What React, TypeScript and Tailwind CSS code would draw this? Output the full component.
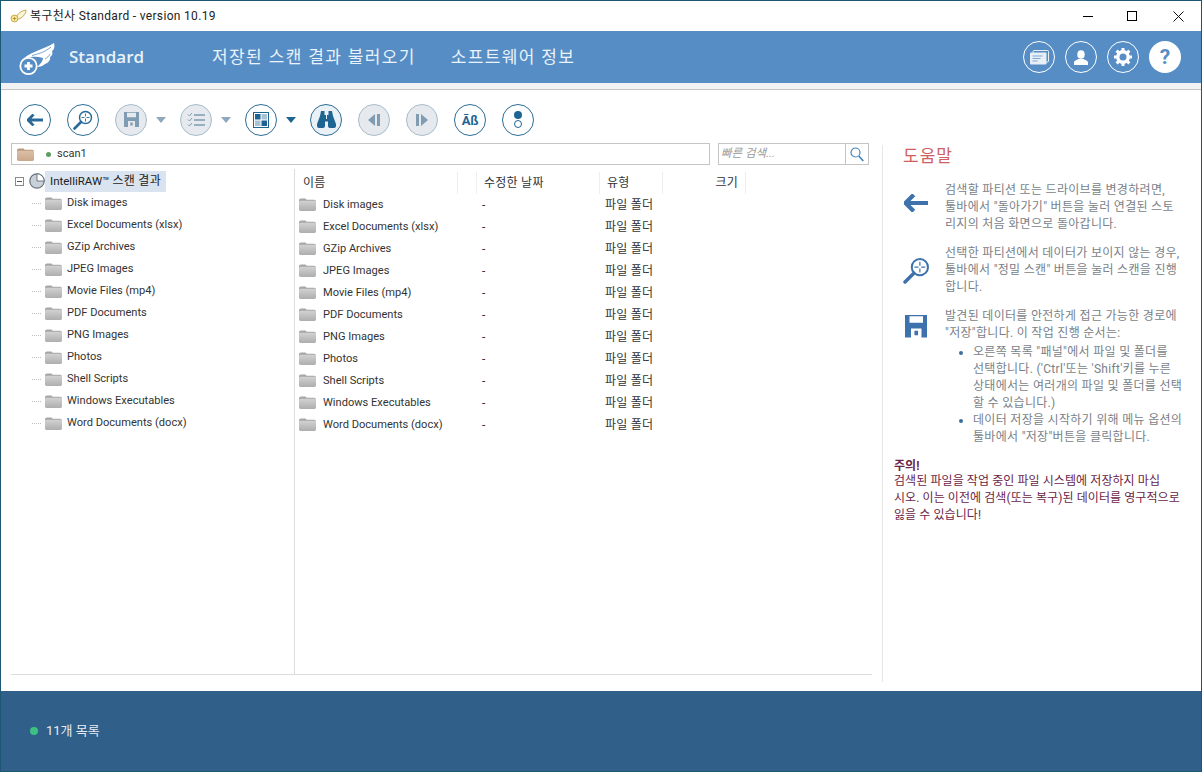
import React from "react";

const FONT = '"Roboto","Noto Sans CJK KR",sans-serif';
const names = ["Disk images","Excel Documents (xlsx)","GZip Archives","JPEG Images","Movie Files (mp4)","PDF Documents","PNG Images","Photos","Shell Scripts","Windows Executables","Word Documents (docx)"];

function Folder({ tan }: { tan?: boolean }) {
  const top = tan ? "#b9977b" : "#a6a6a6";
  const a = tan ? "#dcc0a8" : "#d2d2d2";
  const b = tan ? "#c9a78b" : "#aeaeae";
  return (
    <svg width="17" height="13" viewBox="0 0 18 14" preserveAspectRatio="none" className="shrink-0 mr-[1px]">
      <defs>
        <linearGradient id={tan ? "ft" : "fg"} x1="0" y1="0" x2="0" y2="1">
          <stop offset="0" stopColor={a} /><stop offset="1" stopColor={b} />
        </linearGradient>
      </defs>
      <path d="M2 0.500h4.500c1 0 1.200 1.500 2.500 1.500h7a2 2 0 0 1 2 2V6H0V2.500a2 2 0 0 1 2-2z" fill={top} />
      <rect x="0" y="3" width="18" height="11" rx="1.500" fill={`url(#${tan ? "ft" : "fg"})`} />
    </svg>
  );
}

function Tool({ dim, children }: { dim?: boolean; children: React.ReactNode }) {
  return (
    <div className={dim
      ? "w-8 h-8 rounded-full border border-[#a6bccb] bg-[#e6eaee] flex items-center justify-center shrink-0"
      : "w-8 h-8 rounded-full border border-[#2d6d96] bg-white flex items-center justify-center shrink-0"}>
      {children}
    </div>
  );
}

function Caret({ dim }: { dim?: boolean }) {
  return (
    <svg width="10" height="6" viewBox="0 0 10 6" className="ml-[9px] mr-[14px] shrink-0">
      <path d="M0 0h10L5 6z" fill={dim ? "#8fa8bd" : "#1f6593"} />
    </svg>
  );
}

const Arrow = ({ c = "#2a6a98", s = 1 }: { c?: string; s?: number }) => (
  <svg width={16 * s} height={12 * s} viewBox="0 0 16 12"><path d="M6.500 0.500 L1 6l5.500 5.500M1.500 6H16" fill="none" stroke={c} strokeWidth="2.800" /></svg>
);
const Scan = ({ c = "#2a6a98", s = 1 }: { c?: string; s?: number }) => (
  <svg width={20 * s} height={20 * s} viewBox="0 0 20 20" fill="none" stroke={c}>
    <circle cx="12.500" cy="7.500" r="6" strokeWidth="1.500" />
    <path d="M12.500 3.500v3M12.500 8.500v3M8.500 7.500h3M13.500 7.500h3" strokeWidth="0.900" />
    <path d="M8 12 L1.500 18.500" strokeWidth="2.600" strokeLinecap="round" />
  </svg>
);
const Floppy = ({ c = "#7f9cb3", s = 1 }: { c?: string; s?: number }) => (
  <svg width={15 * s} height={15 * s} viewBox="0 0 15 15">
    <path fillRule="evenodd" fill={c} d="M0 0h15v15H0zM3 0.800v4.400h9V0.800zM4 9v6h7V9z" />
    <rect x="6.300" y="10.500" width="2.400" height="3" fill={c} />
  </svg>
);

function Icon4({ children }: { children: React.ReactNode }) {
  return <div className="w-[42px] flex justify-center shrink-0 mt-[4px]">{children}</div>;
}

export default function App() {
  return (
    <div className="w-[1202px] h-[772px] flex flex-col bg-white border border-[#1c5872] overflow-hidden text-[12px] tracking-[0.25px] text-[#333]" style={{ fontFamily: FONT }}>
      {/* title bar */}
      <div className="h-[30px] flex items-center pl-[9px] shrink-0">
        <svg width="17" height="14" viewBox="0 0 17 14" className="shrink-0">
          <path d="M6 9C7 5 11 2 16 1c0 3-1 4-2 4.500 0 1.500-1 2-2 2.500-1 1.500-3 2-5 2z" fill="#fdf6d8" stroke="#b8952f" strokeWidth="0.800" />
          <circle cx="4.500" cy="9.500" r="3.400" fill="#f8eb9c" stroke="#b8952f" strokeWidth="0.800" />
          <path d="M2.800 9.500h3.400M4.500 7.800v3.400" stroke="#a88520" strokeWidth="0.800" />
        </svg>
        <span className="ml-[3px] text-[12px] text-[#222] tracking-[0.32px]">복구천사 Standard - version 10.19</span>
        <div className="flex-1" />
        <div className="w-[46px] h-full flex items-center justify-center mr-[-2px]"><div className="w-[10px] h-px bg-black" /></div>
        <div className="w-[46px] h-full flex items-center justify-center"><div className="w-[10px] h-[10px] border border-black" /></div>
        <div className="w-[46px] h-full flex items-center justify-center">
          <svg width="11" height="11" viewBox="0 0 11 11"><path d="M.5.5l10 10M10.500.5l-10 10" stroke="#111" strokeWidth="1" /></svg>
        </div>
      </div>

      {/* header */}
      <div className="h-[52px] bg-[#568dc5] flex items-center shrink-0 text-white">
        <svg width="38" height="34" viewBox="0 0 38 34" className="ml-[17px] shrink-0 mt-[3px]" fill="none">
          <path d="M3 20C9 10 25 8 36 1C37 5 36 8 34 9C35 12 34 14 32 15C33 18 30 21 27 22C25 24 22 25 19 25C23 22 25 18 25 16C18 14 9 14 3 20Z" fill="white" />
          <path d="M14 13.500C20 12 27 10 33 5" stroke="#568dc5" strokeWidth="0.800" />
          <path d="M27 17C29 16 31 14 32 12" stroke="#568dc5" strokeWidth="0.800" />
          <circle cx="10.500" cy="24" r="8.200" stroke="white" strokeWidth="1.800" />
          <path d="M6.500 24h8M10.500 20v8" stroke="white" strokeWidth="2.800" />
        </svg>
        <span className="ml-[13px] text-[17px] font-semibold text-[#eaf2fa] tracking-normal" style={{ fontFamily: '"Open Sans",sans-serif' }}>Standard</span>
        <span className="ml-[68px] mt-[1px] text-[17px] text-[#eaf2fa] tracking-[1.35px]">저장된 스캔 결과 불러오기</span>
        <span className="ml-[35px] mt-[1px] text-[17px] text-[#eaf2fa] tracking-[1.35px]">소프트웨어 정보</span>
        <div className="flex-1" />
        <div className="flex gap-[10px] mr-[20px]">
          <div className="w-8 h-8 rounded-full border border-white flex items-center justify-center">
            <svg width="19" height="15" viewBox="0 0 19 15"><rect x="3" y="0.500" width="15.500" height="11.500" rx="1" fill="none" stroke="#e8eff7" /><rect x="0" y="2.500" width="16.500" height="12" rx="1" fill="#e8eff7" /><path d="M2.500 6h10M2.500 8.500h8M2.500 11h5" stroke="#7fa8d2" strokeWidth="1.100" /></svg>
          </div>
          <div className="w-8 h-8 rounded-full border border-white flex items-center justify-center">
            <svg width="14" height="15" viewBox="0 0 14 15" fill="white"><ellipse cx="7" cy="4.500" rx="3.700" ry="4.300" /><path d="M0 15v-2.500c0-2 3-2.500 4.500-3.500h5c1.500 1 4.500 1.500 4.500 3.500V15z" /></svg>
          </div>
          <div className="w-8 h-8 rounded-full border border-white flex items-center justify-center">
            <svg width="20" height="20" viewBox="0 0 20 20"><circle cx="10" cy="10" r="5.200" fill="none" stroke="white" strokeWidth="3.400" /><path d="M10 1v18M1 10h18M3.600 3.600l12.800 12.800M16.400 3.600L3.600 16.400" stroke="white" strokeWidth="3" strokeDasharray="3.500 11 3.500 0" /></svg>
          </div>
          <div className="w-8 h-8 rounded-full bg-white flex items-center justify-center text-[#568dc5] text-[21px] font-bold leading-none tracking-normal">?</div>
        </div>
      </div>
      <div className="h-[7px] bg-[#f0f2f4] border-b border-[#c6c6c6] shrink-0" />

      {/* body */}
      <div className="flex-1 flex min-h-0">
        <div className="flex-1 min-w-0 flex flex-col">
          {/* toolbar */}
          <div className="h-[53px] flex items-center pl-[18px] shrink-0 pt-[6px]">
            <Tool><Arrow /></Tool>
            <div className="w-4 shrink-0" />
            <Tool><Scan /></Tool>
            <div className="w-4 shrink-0" />
            <Tool dim><Floppy /></Tool><Caret dim />
            <Tool dim>
              <svg width="18" height="16" viewBox="0 0 18 16" stroke="#7f9cb3" fill="none"><path d="M7 3h11M7 8h11M7 13h11" strokeWidth="1.500" /><path d="M1 2.500l1.500 1.500 2.500-3M1 7.500l1.500 1.500 2.500-3M1 12.500l1.500 1.500 2.500-3" strokeWidth="1" /></svg>
            </Tool><Caret dim />
            <Tool>
              <svg width="16" height="16" viewBox="0 0 16 16"><rect x=".5" y=".5" width="15" height="15" fill="none" stroke="#1f6593" /><rect x="2" y="2" width="5.500" height="5.500" fill="#1f6593" /><rect x="8.500" y="8.500" width="5.500" height="5.500" fill="#1f6593" /><rect x="8.500" y="2" width="5.500" height="5.500" fill="#a9c3d6" /><rect x="2" y="8.500" width="5.500" height="5.500" fill="#a9c3d6" /></svg>
            </Tool><Caret />
            <div className="w-8 h-8 rounded-full border-[1.500px] border-[#2d6d96] bg-[#eaf1f6] flex items-center justify-center shrink-0">
              <svg width="19" height="17" viewBox="0 0 19 17" fill="#1f6593"><path d="M4 0h3.500v4H9v4H10V4h1.500V0H15l1 5 3 8v2a2 2 0 0 1-2 2h-4a2 2 0 0 1-2-2V10.500H8V15a2 2 0 0 1-2 2H2a2 2 0 0 1-2-2v-2l3-8z" /></svg>
            </div>
            <div className="w-4 shrink-0" />
            <Tool dim>
              <svg width="14" height="14" viewBox="0 0 14 14" fill="#7f9cb3"><path d="M8 1v12L1 7z" /><rect x="10" y="1" width="3" height="12" /></svg>
            </Tool>
            <div className="w-4 shrink-0" />
            <Tool dim>
              <svg width="14" height="14" viewBox="0 0 14 14" fill="#7f9cb3"><path d="M6 1v12l7-6z" /><rect x="1" y="1" width="3" height="12" /></svg>
            </Tool>
            <div className="w-4 shrink-0" />
            <Tool><span className="text-[#1f6593] font-bold text-[13px] leading-none tracking-[-0.3px] pt-[1px]">Āß</span></Tool>
            <div className="w-4 shrink-0" />
            <Tool>
              <div className="flex flex-col items-center gap-[1px]">
                <div className="w-[8px] h-[8px] rounded-full bg-[#1f6593]" />
                <div className="w-[8px] h-[8px] rounded-full border border-[#1f6593]" />
              </div>
            </Tool>
          </div>

          {/* path + search */}
          <div className="flex h-[22px] ml-[10px] mr-[13px] shrink-0 gap-[8px]">
            <div className="flex-1 border border-[#c4c4c4] flex items-center pl-[5px]">
              <Folder tan />
              <div className="w-[5px] h-[5px] rounded-full bg-[#5d9e62] ml-[11px]" />
              <span className="ml-[6px] text-[11px] tracking-normal">scan1</span>
            </div>
            <div className="w-[151px] border border-[#c4c4c4] flex">
              <span className="flex-1 pl-[2px] italic text-[#9a9a9a] text-[11.500px] leading-[18px] tracking-normal">빠른 검색...</span>
              <div className="w-[23px] border-l border-[#c4c4c4] flex items-center justify-center">
                <svg width="14" height="15" viewBox="0 0 14 15" fill="none" stroke="#4a86b8"><circle cx="5.500" cy="5.500" r="4.500" strokeWidth="1.200" /><path d="M8.800 9l4.500 5" strokeWidth="1.800" /></svg>
              </div>
            </div>
          </div>

          {/* panes */}
          <div className="flex-1 min-h-0 flex ml-[10px] mr-[10px] mt-[4px]">
            <div className="w-[284px] border-r border-[#dcdcdc] shrink-0 pl-[4px] pt-[1px]">
              <div className="flex items-center h-[22px]">
                <div className="w-[9px] h-[9px] border border-[#8a8a8a] flex items-center justify-center"><div className="w-[5px] h-px bg-[#555]" /></div>
                <svg width="16" height="16" viewBox="0 0 16 16" className="ml-[5px] shrink-0"><circle cx="8" cy="8" r="7.200" fill="#c9d0d8" stroke="#66727e" strokeWidth="1.200" /><path d="M8 8V.8a7.200 7.200 0 0 1 7.200 7.200z" fill="#fff" stroke="#55606b" strokeWidth="0.800" /></svg>
                <span className="pl-[5px] pr-[5px] h-[21px] leading-[21px] bg-[#d9e4f0] text-[#222]"><span className="text-[11.500px] tracking-normal">IntelliRAW™</span> 스캔 결과</span>
              </div>
              {names.map((n) => (
                <div key={n} className="flex items-center h-[22px]">
                  <div className="ml-[17px] mr-[4px] w-[9px] border-t border-dotted border-[#c0c0c0]" />
                  <Folder />
                  <span className="ml-[4px] text-[11.100px] tracking-normal">{n}</span>
                </div>
              ))}
            </div>
            <div className="flex-1 pl-[8px] pt-[3px] min-w-0">
              <div className="flex h-[22px] items-center">
                <div className="w-[155px] h-full flex items-center border-r border-[#eeeeee]">이름</div>
                <div className="w-[19px] h-full border-r border-[#eeeeee]" />
                <div className="w-[123px] pl-[7px] h-full flex items-center border-r border-[#eeeeee]">수정한 날짜</div>
                <div className="w-[63px] pl-[7px] h-full flex items-center border-r border-[#eeeeee]">유형</div>
                <div className="w-[83px] pr-[7px] h-full flex items-center justify-end border-r border-[#eeeeee]">크기</div>
              </div>
              {names.map((n) => (
                <div key={n} className="flex items-center h-[22px]">
                  <div className="w-[183px] flex items-center ml-[-4px]">
                    <Folder />
                    <span className="ml-[6px] text-[11.100px] tracking-normal">{n}</span>
                  </div>
                  <div className="w-[123px]">-</div>
                  <div>파일 폴더</div>
                </div>
              ))}
            </div>
          </div>
          <div className="h-px bg-[#dcdcdc] ml-[10px] mr-[10px] shrink-0" />
          <div className="h-[16px] shrink-0" />
        </div>

        {/* help */}
        <div className="w-[319px] shrink-0 pb-[15px] pt-[49px]">
          <div className="h-full border-l border-[#e6e6e6] pl-[20px] text-[#7a7f88] leading-[17px] text-[12px] whitespace-nowrap tracking-[0.3px]">
            <div className="text-[17px] text-[#d0605f] leading-[22px] tracking-[1px] mt-[6px]">도움말</div>
            <div className="flex mt-[15px] ml-[-8px] gap-[8px]">
              <Icon4><div className="mt-[8px]"><Arrow c="#3e72ad" s={1.500} /></div></Icon4>
              <div>검색할 파티션 또는 드라이브를 변경하려면,<br />툴바에서 "돌아가기" 버튼을 눌러 연결된 스토<br />리지의 처음 화면으로 돌아갑니다.</div>
            </div>
            <div className="flex mt-[12px] ml-[-8px] gap-[8px]">
              <Icon4><div className="mt-[8px]"><Scan c="#3e72ad" s={1.350} /></div></Icon4>
              <div>선택한 파티션에서 데이터가 보이지 않는 경우,<br />툴바에서 "정밀 스캔" 버튼을 눌러 스캔을 진행<br />합니다.</div>
            </div>
            <div className="flex mt-[12px] ml-[-8px] gap-[8px]">
              <Icon4><div className="mt-[3px]"><Floppy c="#3e72ad" s={1.500} /></div></Icon4>
              <div>
                <div>발견된 데이터를 안전하게 접근 가능한 경로에<br />"저장"합니다. 이 작업 진행 순서는:</div>
                <ul className="list-disc pl-[28px] mt-[2px] marker:text-[#3e6d9e]">
                  <li>오른쪽 목록 "패널"에서 파일 및 폴더를<br />선택합니다. ('Ctrl'또는 'Shift'키를 누른<br />상태에서는 여러개의 파일 및 폴더를 선택<br />할 수 있습니다.)</li>
                  <li>데이터 저장을 시작하기 위해 메뉴 옵션의<br />툴바에서 "저장"버튼을 클릭합니다.</li>
                </ul>
              </div>
            </div>
            <div className="mt-[13px] ml-[-9px] text-[#6a2548] tracking-[0.08px]">
              <div className="font-bold leading-[14px]">주의!</div>
              <div>검색된 파일을 작업 중인 파일 시스템에 저장하지 마십<br />시오. 이는 이전에 검색(또는 복구)된 데이터를 영구적으로<br />잃을 수 있습니다!</div>
            </div>
          </div>
        </div>
      </div>

      {/* footer */}
      <div className="h-[80px] bg-[#305f8a] shrink-0 flex items-center pl-[29px] text-[#e6edf3] text-[13px] tracking-normal">
        <div className="w-2 h-2 rounded-full bg-[#3cc183]" />
        <span className="ml-[8px]">11개 목록</span>
      </div>
    </div>
  );
}
